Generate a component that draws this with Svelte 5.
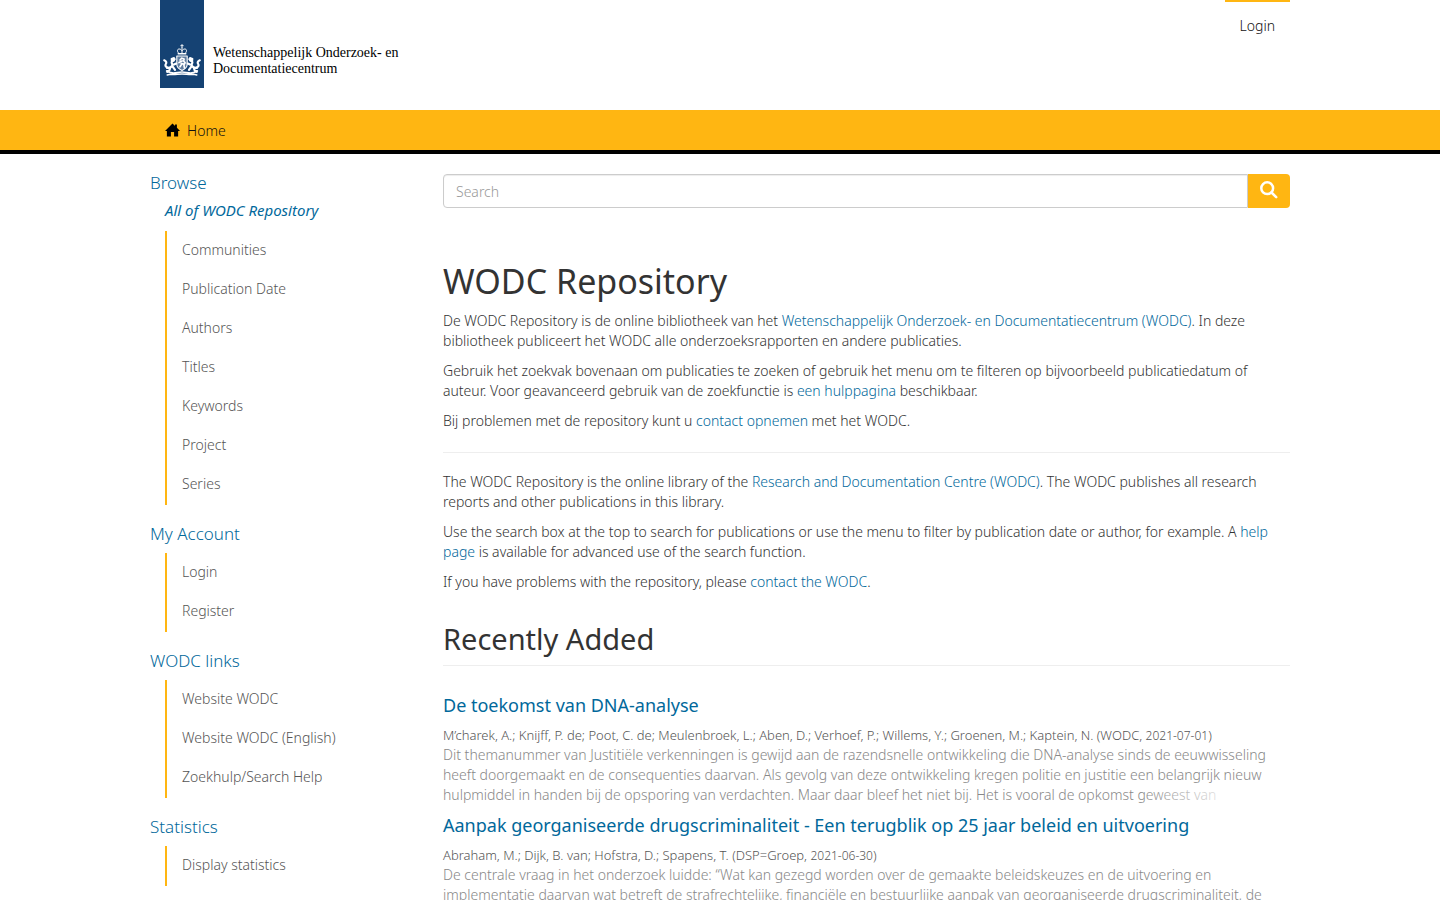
<script>
  const groups = [
    { title: 'Browse', sub: 'All of WODC Repository', items: ['Communities', 'Publication Date', 'Authors', 'Titles', 'Keywords', 'Project', 'Series'] },
    { title: 'My Account', items: ['Login', 'Register'] },
    { title: 'WODC links', items: ['Website WODC', 'Website WODC (English)', 'Zoekhulp/Search Help'] },
    { title: 'Statistics', items: ['Display statistics'] }
  ];
  const publications = [
    {
      title: 'De toekomst van DNA-analyse',
      authors: 'M’charek, A.; Knijff, P. de; Poot, C. de; Meulenbroek, L.; Aben, D.; Verhoef, P.; Willems, Y.; Groenen, M.; Kaptein, N.',
      publisher: 'WODC',
      date: '2021-07-01',
      abstract: 'Dit themanummer van Justitiële verkenningen is gewijd aan de razendsnelle ontwikkeling die DNA-analyse sinds de eeuwwisseling heeft doorgemaakt en de consequenties daarvan. Als gevolg van deze ontwikkeling kregen politie en justitie een belangrijk nieuw hulpmiddel in handen bij de opsporing van verdachten. Maar daar bleef het niet bij. Het is vooral de opkomst geweest van'
    },
    {
      title: 'Aanpak georganiseerde drugscriminaliteit - Een terugblik op 25 jaar beleid en uitvoering',
      authors: 'Abraham, M.; Dijk, B. van; Hofstra, D.; Spapens, T.',
      publisher: 'DSP=Groep',
      date: '2021-06-30',
      abstract: 'De centrale vraag in het onderzoek luidde: “Wat kan gezegd worden over de gemaakte beleidskeuzes en de uitvoering en implementatie daarvan wat betreft de strafrechtelijke, financiële en bestuurlijke aanpak van georganiseerde drugscriminaliteit, de'
    }
  ];
  let query = $state('');
</script>

<header class="container masthead">
  <a class="brand" href="#home" aria-label="Wetenschappelijk Onderzoek- en Documentatiecentrum">
    <svg class="ribbon" viewBox="0 0 44 88" aria-hidden="true">
      <path d="M0 0h44v88H0z" fill="#154273" />
      <g fill="none" stroke="#fff" stroke-linecap="round" stroke-linejoin="round">
        <path d="M22 44.5v3M20.8 45.7h2.4" stroke-width=".9" />
        <path d="M18.700 53.2c-1.800-1.800-1.700-4 .4-4.200 1.4-.1 2.1.8 2.900 1.600.8-.8 1.500-1.700 2.900-1.600 2.100.2 2.200 2.400.4 4.200M22 47.700v5" stroke-width="1" />
        <path d="M18.2 53.8h7.6" stroke-width="1.4" />
        <path d="M16.8 56h10.4v8.2c0 3-2.1 4.8-5.2 6.3-3.1-1.5-5.2-3.3-5.2-6.3z" stroke-width="1.1" fill="#5f7d9f" />
        <path d="M20 60l1.8-1.8 2.3.8-.5 2 1.5 1.8-1.2 2 .5 3M22 61l-3 1.5M22 63.6l-2 3.2M23.5 64l-2.3-.5" stroke-width="1.7" />
        <path d="M13.7 60.7c-2 .2-2.6 1.6-1.6 3.2.8 1.4-.2 2.7-2.5 3.8l-2.5.3M14 64.6l2.2-1M12.7 66.7l2.3 3.1M10.4 67.4L9.1 71H6.9M8.3 67.9c-2.6-.9-3.6-2.6-2.4-4 1-1.2.3-2.7-1.7-3.6" stroke-width="2.2" />
        <path d="M30.3 60.7c2 .2 2.6 1.6 1.6 3.2-.8 1.4.2 2.7 2.5 3.8l2.5.3M30 64.6l-2.2-1M31.3 66.7L29 69.8M33.6 67.4l1.3 3.6h2.2M35.7 67.9c2.6-.9 3.6-2.6 2.4-4-1-1.2-.3-2.7 1.7-3.6" stroke-width="2.2" />
        <path d="M11.4 58.7l2.6-.9 1 1.3-1.5 1.5-2-.2zM32.6 58.7l-2.6-.9-1 1.3 1.5 1.5 2-.2z" stroke-width="1.5" fill="#fff" />
        <path d="M7 72.2c2-.8 4 .7 6.3.7 3.2 0 5.5-1 8.7-1s5.5 1 8.7 1c2.3 0 4.3-1.5 6.3-.7M7.2 74.900l3-.6c4 .8 7.6-.4 11.8-.4s7.8 1.2 11.8.4l3 .6" stroke-width="1.5" />
      </g>
    </svg>
    <span class="wordmark">Wetenschappelijk Onderzoek- en<br />Documentatiecentrum</span>
  </a>
  <nav class="user" aria-label="Account"><a href="#login">Login</a></nav>
</header>

<nav class="trail" aria-label="Breadcrumb">
  <div class="container">
    <a href="#home">
      <svg viewBox="0 0 16 14" aria-hidden="true"><path d="M8 0l2.7 2.6V1h2v3.6L16 8h-2v6H9.7V9.2H6.3V14H2V8H0z" /></svg>
      <span>Home</span>
    </a>
  </div>
</nav>

<div class="container columns">
  <aside>
    {#each groups as group}
      <section class="group">
        <h2>{group.title}</h2>
        {#if group.sub}<p class="sub">{group.sub}</p>{/if}
        <ul>
          {#each group.items as item}
            <li><a href="#browse">{item}</a></li>
          {/each}
        </ul>
      </section>
    {/each}
  </aside>

  <main>
    <form class="search" role="search" onsubmit={(e) => e.preventDefault()}>
      <input type="text" aria-label="Search" placeholder="Search" bind:value={query} />
      <button aria-label="Go">
        <svg viewBox="0 0 18 18" aria-hidden="true"><circle cx="7.2" cy="7.2" r="5.9" /><path d="M11.5 11.5l4.7 4.7" /></svg>
      </button>
    </form>

    <h1>WODC Repository</h1>
    <p>De WODC Repository is de online bibliotheek van het <a href="#wodc">Wetenschappelijk Onderzoek- en Documentatiecentrum (WODC)</a>. In deze bibliotheek publiceert het WODC alle onderzoeksrapporten en andere publicaties.</p>
    <p>Gebruik het zoekvak bovenaan om publicaties te zoeken of gebruik het menu om te filteren op bijvoorbeeld publicatiedatum of auteur. Voor geavanceerd gebruik van de zoekfunctie is <a href="#hulp">een hulppagina</a> beschikbaar.</p>
    <p>Bij problemen met de repository kunt u <a href="#contact">contact opnemen</a> met het WODC.</p>
    <hr />
    <p>The WODC Repository is the online library of the <a href="#wodc">Research and Documentation Centre (WODC)</a>. The WODC publishes all research reports and other publications in this library.</p>
    <p>Use the search box at the top to search for publications or use the menu to filter by publication date or author, for example. A <a href="#help">help page</a> is available for advanced use of the search function.</p>
    <p>If you have problems with the repository, please <a href="#contact">contact the WODC</a>.</p>

    <h2 class="recent">Recently Added</h2>
    {#each publications as pub}
      <article>
        <h3><a href="#item">{pub.title}</a></h3>
        <div class="meta">{pub.authors} ({pub.publisher}, <time>{pub.date}</time>)</div>
        <div class="abstract">{pub.abstract}</div>
      </article>
    {/each}
  </main>
</div>

<style>
  :global(body) {
    font: 300 14px/20px "Noto Sans", sans-serif;
    color: #333;
    background: #fff;
  }
  a { color: #01689b; text-decoration: none; }
  .container { max-width: 1140px; margin: 0 auto; padding: 0 15px; }
  .masthead { display: flex; justify-content: space-between; align-items: flex-start; min-height: 110px; }
  .brand { display: flex; align-items: flex-end; gap: 9px; margin-left: 10px; color: #000; }
  .ribbon { width: 44px; height: 88px; }
  .wordmark { font: 14px/16px "Liberation Serif", serif; padding-bottom: 11px; }
  .user a { display: block; padding: 14px 15px 15px; border-top: 2px solid #ffb612; color: #111; }
  .trail { background: #ffb612; border-bottom: 4px solid #000; }
  .trail a { display: inline-flex; align-items: center; gap: 7px; padding: 10px 15px; color: #111; }
  .trail svg { width: 15px; height: 14px; fill: #000; }
  .trail span { line-height: 18px; padding-top: 2px; }
  .columns { display: grid; grid-template-columns: minmax(0, 263fr) minmax(0, 847fr); gap: 30px; padding-top: 20px; }
  .group { margin-bottom: 20px; }
  .group h2 { margin: 0; padding-bottom: 10px; font-size: 17px; line-height: 18px; font-weight: 300; color: #01689b; }
  .sub { margin: -2px 0 0; padding: 0 15px 11px; font-size: 15px; line-height: 20px; font-style: italic; font-weight: 400; color: #01689b; }
  .group ul { list-style: none; margin: 0 0 0 15px; padding: 0 0 1px; border-left: 2px solid #ffb612; }
  .group li a { display: block; padding: 9px 15px 10px; color: #555; }
  .search { display: flex; margin-bottom: 54px; }
  .search input { flex: 1; min-width: 0; height: 34px; box-sizing: border-box; padding: 6px 12px; border: 1px solid #ccc; border-radius: 4px 0 0 4px; font: inherit; box-shadow: inset 0 1px 1px rgba(0, 0, 0, .075); }
  .search input::placeholder { color: #999; }
  .search button { width: 42px; border: 0; border-radius: 0 4px 4px 0; background: #ffb612; padding: 0 0 2px; display: grid; place-items: center; }
  .search svg { width: 18px; height: 18px; fill: none; stroke: #fff; stroke-width: 2.5; stroke-linecap: round; }
  h1 { margin: 0 0 10px; font-size: 34px; line-height: 39px; font-weight: 400; }
  p { margin: 0 0 10px; }
  hr { margin: 21px 0 19px; border: 0; border-top: 1px solid #eee; }
  .recent { margin: 30px 0 29px; padding-bottom: 10px; border-bottom: 1px solid #eee; font-size: 29px; line-height: 33px; font-weight: 400; }
  h3 { margin: 0 0 10px; font-size: 18px; line-height: 20px; font-weight: 400; }
  article { margin-bottom: 10px; }
  .meta { font-size: 13px; color: #555; }
  time { font-size: 12px; line-height: 1; }
  .abstract { position: relative; min-height: 60px; max-height: 60px; overflow: hidden; color: #888; }
  .abstract::after { content: ''; position: absolute; right: 0; bottom: 0; width: 150px; height: 20px; background: linear-gradient(to right, rgba(255, 255, 255, 0), #fff 70%); }
</style>
